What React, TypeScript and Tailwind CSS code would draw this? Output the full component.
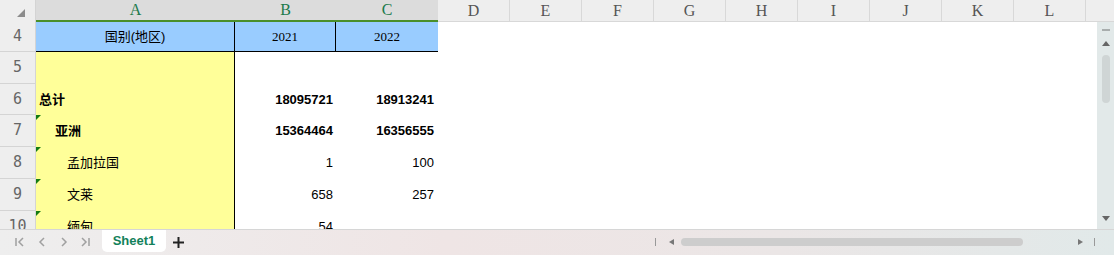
import React from "react";

const cols = ["D", "E", "F", "G", "H", "I", "J", "K", "L"];

type Row = {
  n: number;
  h: string;
  label: string;
  indent: string;
  bold?: boolean;
  mark?: boolean;
  b: string;
  c: string;
};

const rows: Row[] = [
  { n: 5, h: "h-[32px]", label: "", indent: "pl-[3px]", b: "", c: "" },
  { n: 6, h: "h-[31px]", label: "总计", indent: "pl-[3px]", bold: true, b: "18095721", c: "18913241" },
  { n: 7, h: "h-[32px]", label: "亚洲", indent: "pl-[19px]", bold: true, mark: true, b: "15364464", c: "16356555" },
  { n: 8, h: "h-[32px]", label: "孟加拉国", indent: "pl-[31px]", mark: true, b: "1", c: "100" },
  { n: 9, h: "h-[32px]", label: "文莱", indent: "pl-[31px]", mark: true, b: "658", c: "257" },
  { n: 10, h: "h-[32px]", label: "缅甸", indent: "pl-[31px]", mark: true, b: "54", c: "" },
];

const cjk = "font-['Liberation_Sans','Noto_Sans_CJK_SC',sans-serif]";
const letter = "font-['Liberation_Serif',serif]";
const mono = "font-['DejaVu_Sans_Mono',monospace]";

const App: React.FC = () => {
  return (
    <div className="w-[1114px] h-[255px] flex flex-col overflow-hidden bg-white select-none">
      {/* column headers */}
      <div className={`flex h-[22px] shrink-0 text-[16px] ${letter}`}>
        <div className="w-[36px] bg-[#eeeeee] border-r border-[#d4d4d4] flex items-end justify-center pb-[5px]">
          <div className="w-0 h-0 border-l-[8px] border-l-transparent border-b-[8px] border-b-[#8c8c8c] ml-[6px]" />
        </div>
        <div className="w-[199px] bg-[#dcdcdc] border-b-2 border-[#4a8f2a] flex items-center justify-center text-[#1b7a4b]">A</div>
        <div className="w-[101px] bg-[#dcdcdc] border-b-2 border-[#4a8f2a] flex items-center justify-center text-[#1b7a4b]">B</div>
        <div className="w-[102px] bg-[#dcdcdc] border-b-2 border-[#4a8f2a] flex items-center justify-center text-[#1b7a4b]">C</div>
        {cols.map((c) => (
          <div key={c} className="w-[72px] bg-[#eeeeee] border-r border-b border-[#d8d8d8] flex items-center justify-center text-[#555555]">
            {c}
          </div>
        ))}
        <div className="flex-1 bg-[#eeeeee] border-b border-[#d8d8d8]" />
      </div>

      <div className="flex flex-1 min-h-0">
        <div className="flex-1 flex flex-col overflow-hidden">
          {/* row 4 */}
          <div className="flex h-[30px] shrink-0">
            <div className={`w-[36px] bg-[#eeeeee] border-r border-b border-[#d4d4d4] flex items-center justify-center text-[15px] font-light text-[#666666] ${mono}`}>4</div>
            <div className={`w-[199px] bg-[#99ccff] border-r border-b border-black flex items-center justify-center text-[13px] text-black ${cjk}`}>国别(地区)</div>
            <div className="w-[101px] bg-[#99ccff] border-r border-b border-black flex items-center justify-center text-[13px] text-black font-['Liberation_Serif',serif]">2021</div>
            <div className="w-[102px] bg-[#99ccff] border-b border-black flex items-center justify-center text-[13px] text-black font-['Liberation_Serif',serif]">2022</div>
          </div>
          {rows.map((r) => (
            <div key={r.n} className={`flex shrink-0 ${r.h}`}>
              <div className={`w-[36px] bg-[#eeeeee] border-r border-b border-[#d4d4d4] flex items-center justify-center text-[15px] font-light text-[#666666] ${mono}`}>
                {r.n}
              </div>
              <div className={`relative w-[199px] bg-[#ffff99] border-r border-black flex items-center ${r.indent} text-[13px] text-black ${cjk} ${r.bold ? "font-bold" : ""}`}>
                {r.mark && (
                  <div className="absolute left-0 top-0 w-0 h-0 border-t-[5px] border-t-[#137a13] border-r-[5px] border-r-transparent" />
                )}
                {r.label}
              </div>
              <div className={`w-[101px] flex items-center justify-end pr-[3px] text-[13px] text-black font-['Liberation_Sans',sans-serif] ${r.bold ? "font-bold" : ""}`}>
                {r.b}
              </div>
              <div className={`w-[102px] flex items-center justify-end pr-[4px] text-[13px] text-black font-['Liberation_Sans',sans-serif] ${r.bold ? "font-bold" : ""}`}>
                {r.c}
              </div>
            </div>
          ))}
        </div>

        {/* vertical scrollbar */}
        <div className="w-[17px] bg-[#e2e9e9] flex flex-col items-center pt-[7px] pb-[8px]">
          <div className="w-[8px] h-[2px] bg-[#a8adad]" />
          <div className="mt-[10px] w-0 h-0 border-l-[4px] border-r-[4px] border-b-[5px] border-l-transparent border-r-transparent border-b-[#666666]" />
          <div className="mt-[9px] w-[8px] h-[48px] rounded-full bg-[#cfd5d5]" />
          <div className="flex-1" />
          <div className="w-0 h-0 border-l-[4px] border-r-[4px] border-t-[5px] border-l-transparent border-r-transparent border-t-[#666666]" />
        </div>
      </div>

      {/* bottom bar */}
      <div className="h-[26px] shrink-0 border-t border-[#d6d6d6] bg-[linear-gradient(90deg,#eeeeee_0%,#efe5e5_40%,#ebe6e6_70%,#e1e9e9_100%)] flex items-start">
        <div className="flex items-center h-[24px] text-[#a0a0a0]">
          <div className="ml-[14px] flex items-center">
            <svg width="12" height="12" viewBox="0 0 12 12" fill="none" stroke="currentColor" strokeWidth="1.5">
              <path d="M2 2v8M9 2L5 6l4 4" />
            </svg>
          </div>
          <div className="ml-[10px] flex items-center">
            <svg width="12" height="12" viewBox="0 0 12 12" fill="none" stroke="currentColor" strokeWidth="1.5">
              <path d="M8 2L4 6l4 4" />
            </svg>
          </div>
          <div className="ml-[10px] flex items-center">
            <svg width="12" height="12" viewBox="0 0 12 12" fill="none" stroke="currentColor" strokeWidth="1.5">
              <path d="M4 2l4 4-4 4" />
            </svg>
          </div>
          <div className="ml-[9px] flex items-center">
            <svg width="12" height="12" viewBox="0 0 12 12" fill="none" stroke="currentColor" strokeWidth="1.5">
              <path d="M3 2l4 4-4 4M10 2v8" />
            </svg>
          </div>
        </div>
        <div className="ml-[11px] w-[64px] h-[22px] bg-white rounded-b-[5px] flex items-center justify-center text-[13px] font-bold text-[#13815a] font-['Liberation_Sans',sans-serif]">
          Sheet1
        </div>
        <div className="ml-[7px] h-[24px] flex items-center text-[#222222]">
          <svg width="11" height="11" viewBox="0 0 11 11" stroke="currentColor" strokeWidth="2">
            <path d="M5.5 0v11M0 5.5h11" />
          </svg>
        </div>
        <div className="flex-1" />
        <div className="h-[24px] flex items-center">
          <div className="w-[1px] h-[8px] bg-[#999999]" />
          <div className="ml-[13px] w-0 h-0 border-t-[3px] border-b-[3px] border-r-[5px] border-t-transparent border-b-transparent border-r-[#777777]" />
          <div className="ml-[7px] w-[342px] h-[8px] rounded-full bg-[#cdcdcd]" />
          <div className="ml-[55px] w-0 h-0 border-t-[3px] border-b-[3px] border-l-[5px] border-t-transparent border-b-transparent border-l-[#777777]" />
          <div className="ml-[11px] w-[1px] h-[8px] bg-[#999999]" />
          <div className="w-[19px]" />
        </div>
      </div>
    </div>
  );
};

export default App;
